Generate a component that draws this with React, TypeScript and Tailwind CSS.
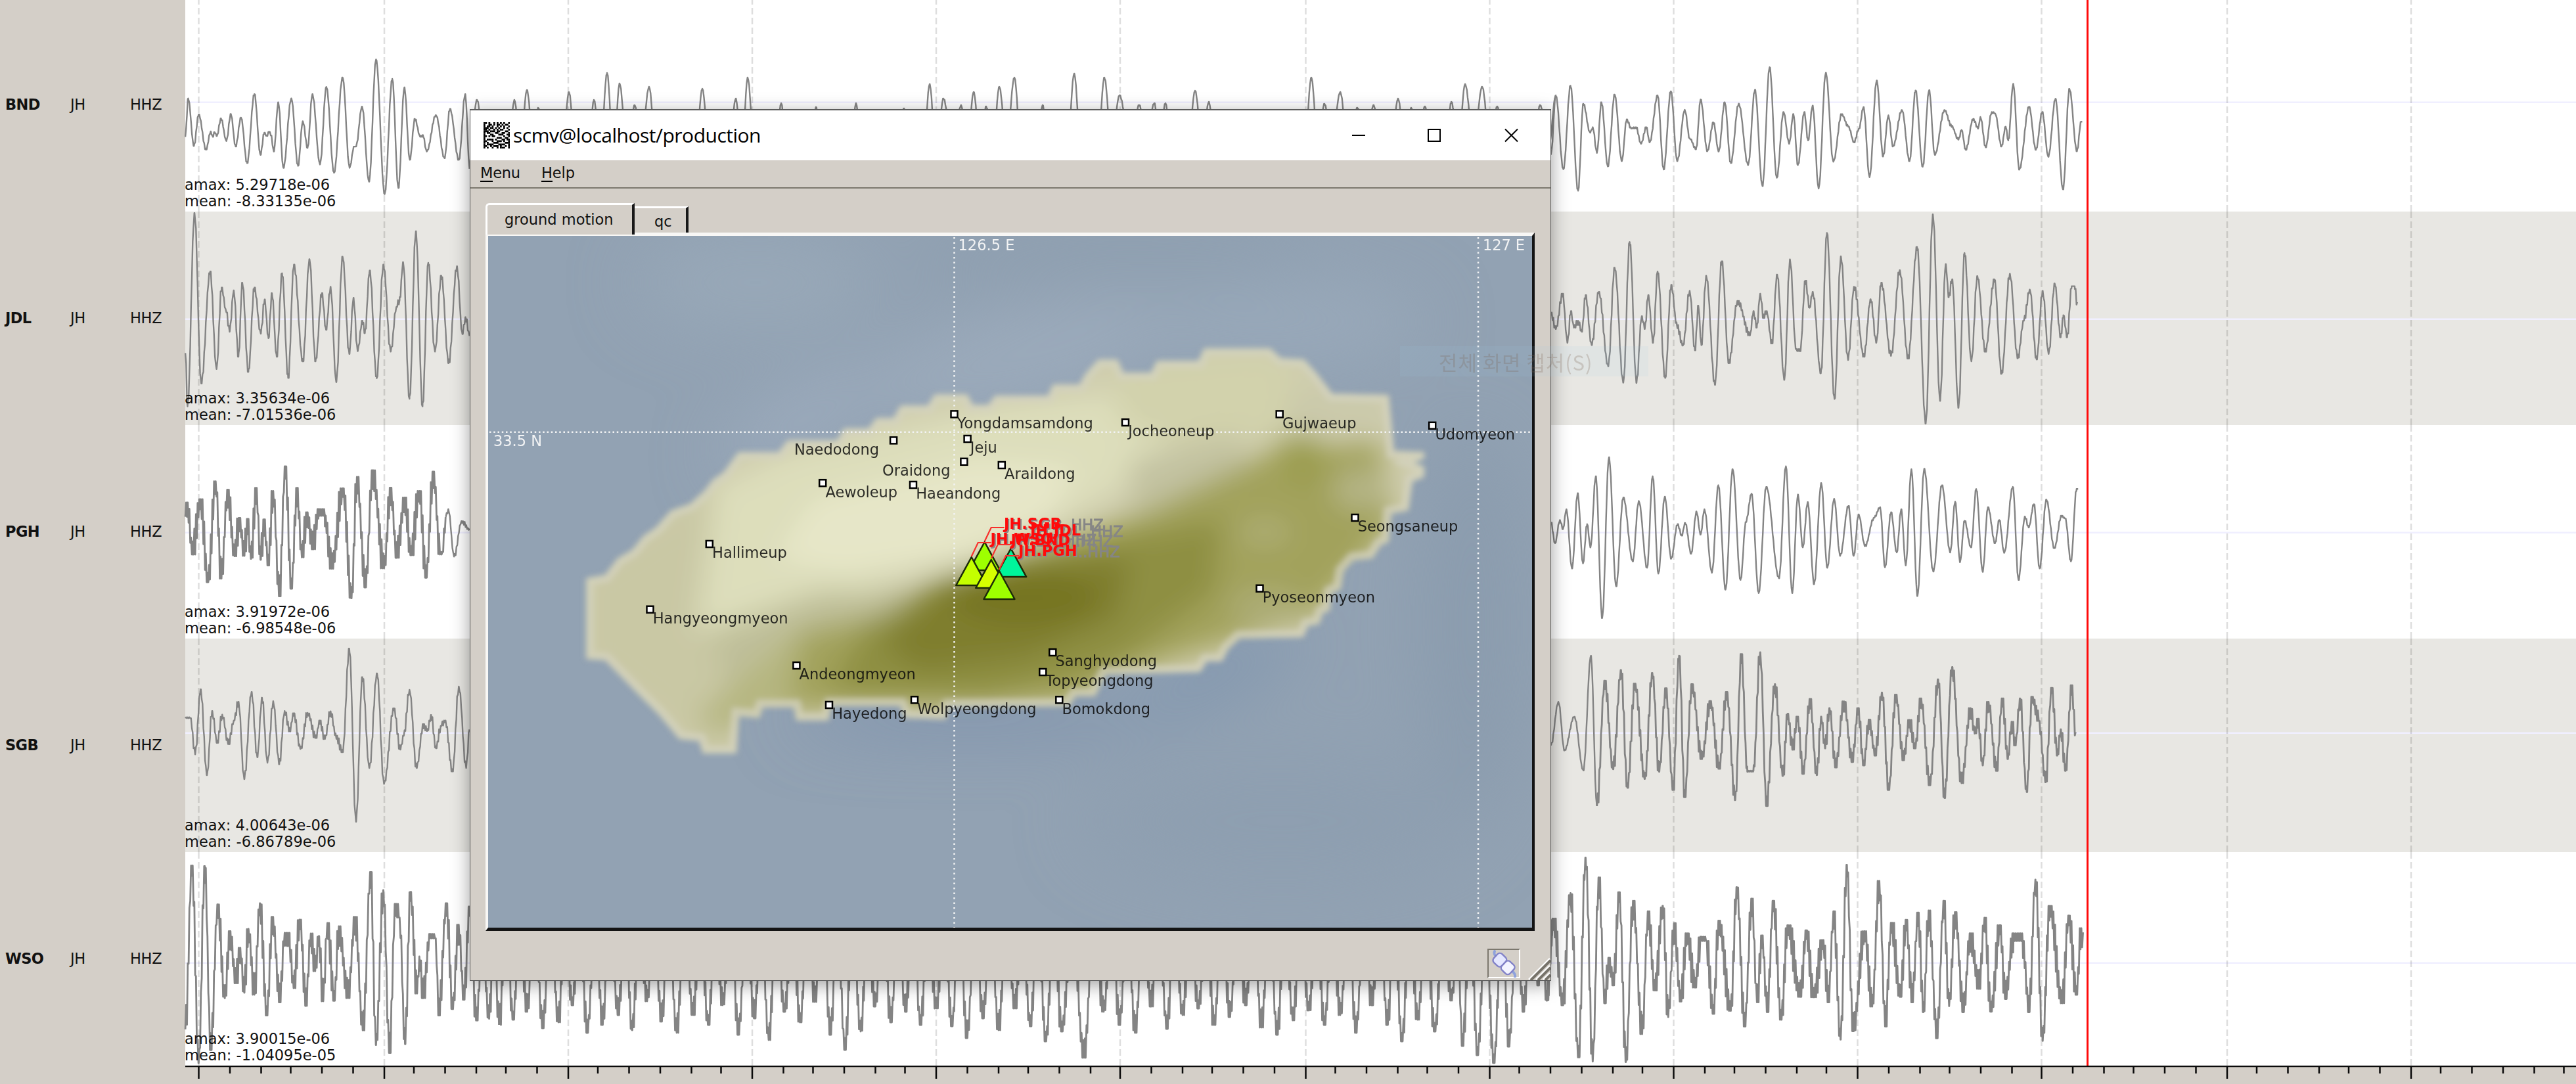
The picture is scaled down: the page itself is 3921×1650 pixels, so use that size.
import React from "react";

type Pt = [number, number];
type Segment = { x0: number; y0: number; sx: number; sy: number; jitter: number; data: string };
type Station = { code: string; amax: string; mean: string; zero: number; shaded: boolean; segments: Segment[] };

const LEFT = 2.0632;
const RIGHT = 1.7422;

const STATIONS: Station[] = [
  {
    code: "BND", amax: "5.29718e-06", mean: "-8.33135e-06", zero: 155.7, shaded: false,
    segments: [
      { x0: 0, y0: 0, sx: LEFT, sy: 2.3758, jitter: 2, data: "582,495 591,356 609,528 624,414 647,541 662,475 668,495 674,478 681,492 694,428 711,510 725,412 740,530 757,425 776,590 799,340 818,560 830,480 838,492 845,476 851,490 860,548 874,370 890,607 915,356 936,600 951,438 966,535 981,340 1005,595 1025,314 1049,625 1076,280 1098,607 1112,530 1118,530 1137,385 1159,657 1181,215 1208,702 1232,285 1251,680 1270,316 1287,578 1303,430 1320,495 1328,488 1340,548 1369,416 1396,572 1413,394 1441,578 1461,340 1475,610" },
      { x0: 0, y0: 0, sx: 1, sy: 1, jitter: 1, data: "714,250 726,152 740,260 772,260 783,152 792,230 802,137 812,220 819,164 830,250 855,250 866,140 877,250 895,240 904,152 914,230 924,111 934,240 943,127 955,240 966,160 976,220 988,132 999,240 1058,240 1069,135 1080,240 1109,240 1120,150 1129,240 1138,118 1149,240 1180,240 1189,157 1198,240 1233,240 1242,163 1250,240 1294,240 1303,157 1312,250 1367,240 1376,165 1385,240 1405,240 1415,128 1425,240 1436,150 1450,230 1463,160 1472,230 1482,140 1492,230 1501,162 1511,230 1521,132 1532,220 1544,118 1555,240 1578,240 1587,160 1596,240 1624,240 1635,112 1646,240 1670,240 1681,118 1692,220 1704,145 1720,220 1734,160 1745,210 1757,157 1765,210 1774,157 1783,230 1808,230 1819,138 1830,220 1840,155 1850,240 1985,240 1996,118 2006,220 2016,158 2027,220 2040,140 2052,230 2066,164 2078,220 2091,160 2100,230 2117,230 2128,150 2138,220 2148,164 2158,220 2169,162 2178,240 2200,240 2209,155 2220,220 2230,128 2243,220 2256,132 2268,220 2279,162 2288,220 2335,220 2344,160 2358,220 2368,145" },
      { x0: 2340, y0: 0, sx: RIGHT, sy: 2.3758, jitter: 2, data: "36,560 49,345 69,612 88,310 108,690 122,375 140,480 147,460 158,553 170,370 187,602 205,342 224,583 237,432 249,465 262,460 275,520 289,460 298,515 319,345 335,613 354,330 371,583 391,397 404,500 421,540 433,360 451,547 467,443 481,548 497,370 513,590 534,375 559,597 577,325 597,673 616,243 635,643 653,405 668,520 679,412 691,597 708,405 718,508 730,382 746,682 765,263 785,585 807,413 825,458 840,515 853,465 865,387 881,641 900,291 917,566 931,417 943,530 967,398 987,583 1003,327 1022,603 1039,326 1054,560 1080,398 1098,455 1117,505 1125,470 1136,542 1156,430 1169,465 1175,423 1189,533 1205,405 1214,410 1231,530 1242,458 1249,508 1262,303 1278,614 1304,386 1322,542 1339,405 1355,567 1374,357 1394,685 1411,321 1431,547 1442,440 1447,440" },
    ],
  },
  {
    code: "JDL", amax: "3.35634e-06", mean: "-7.01536e-06", zero: 485.7, shaded: true,
    segments: [
      { x0: 0, y0: 0, sx: LEFT, sy: 2.3758, jitter: 5, data: "582,1265 589,1470 611,770 632,1387 660,982 680,1335 696,1040 711,1130 721,1200 734,1050 749,1290 761,1022 780,1345 799,1040 819,1207 831,1083 843,1223 854,1060 869,1290 886,988 905,1367 923,957 951,1307 972,937 991,1307 1011,1060 1024,1193 1038,1037 1056,1382 1076,928 1097,1280 1110,1077 1123,1270 1138,1160 1146,1205 1161,978 1183,1368 1204,957 1227,1272 1245,1110 1255,1085 1266,948 1286,1442 1306,836 1327,1470 1345,950 1366,1272 1386,997 1409,1313 1435,963 1452,1208 1462,1147 1475,1215" },
      { x0: 2340, y0: 0, sx: RIGHT, sy: 2.3758, jitter: 5, data: "36,1130 49,1190 67,1062 80,1240 89,1125 97,1185 108,1160 118,1200 128,1067 144,1248 163,1055 188,1325 205,968 228,1384 245,875 263,1385 277,1143 285,1190 294,1067 307,1240 319,982 339,1367 355,1030 370,1175 386,1250 404,1052 418,1267 427,1105 435,1248 448,997 471,1392 489,945 508,1313 531,1088 564,1213 573,1125 582,1185 591,1062 600,1150 608,1125 622,1242 636,993 655,1374 670,938 686,1262 697,1270 711,1015 722,1113 730,1055 752,1350 768,842 788,1443 805,927 824,1302 840,1037 866,1290 884,1082 899,1240 912,1022 938,1287 961,977 983,1297 1007,893 1030,1532 1049,775 1068,1450 1083,955 1091,1075 1100,1010 1117,1475 1133,915 1151,1307 1167,998 1188,1272 1212,1010 1231,1352 1253,990 1274,1296 1290,1160 1306,1047 1324,1300 1340,1052 1356,1280 1372,1025 1388,1220 1395,1140 1405,1220 1417,1035 1425,1035 1432,1105" },
    ],
  },
  {
    code: "PGH", amax: "3.91972e-06", mean: "-6.98548e-06", zero: 810.7, shaded: false,
    segments: [
      { x0: 0, y0: 640, sx: LEFT, sy: 3, jitter: 26, data: "582,440 589,375 604,612 630,360 653,738 677,278 695,722 715,316 737,620 752,445 767,618 777,450 788,632 805,308 818,636 830,452 842,662 858,322 877,803 896,210 915,768 933,308 948,625 964,420 982,588 1001,405 1020,435 1041,677 1077,310 1104,812 1121,258 1148,762 1170,228 1206,675 1227,307 1246,627 1272,352 1290,615 1317,322 1338,718 1361,234 1382,612 1390,600 1400,440" },
      { x0: 0, y0: 640, sx: LEFT, sy: 3, jitter: 3, data: "1400,440 1408,405 1426,622 1450,460 1475,500" },
      { x0: 2340, y0: 640, sx: RIGHT, sy: 1.5525, jitter: 2, data: "36,240 47,290 60,235 68,257 77,210 92,350 107,172 121,338 132,245 141,300 155,132 172,467 190,87 209,392 228,182 253,333 269,190 291,348 306,132 321,362 338,180 355,327 372,245 383,272 392,242 408,315 422,215 433,270 443,210 463,360 480,153 499,400 518,115 539,377 553,240 568,173 587,408 607,157 641,373 659,108 676,408 691,175 704,300 717,193 734,387 753,148 769,348 787,185 803,320 825,202 839,320 852,222 869,297 893,230 909,205 922,347 938,217 953,312 965,210 977,343 992,115 1008,415 1026,114 1050,357 1073,153 1095,312 1108,192 1121,335 1133,237 1150,300 1164,162 1181,358 1195,205 1214,290 1225,235 1238,313 1261,157 1276,377 1293,227 1303,253 1317,198 1332,350 1350,187 1371,302 1390,225 1400,232 1415,333 1430,162 1435,162" },
    ],
  },
  {
    code: "SGB", amax: "4.00643e-06", mean: "-6.86789e-06", zero: 1115.7, shaded: true,
    segments: [
      { x0: 0, y0: 640, sx: LEFT, sy: 3, jitter: 6, data: "582,1355 598,1360 613,1525 630,1228 650,1620 666,1327 682,1472 698,1343 717,1478 735,1370 749,1285 767,1638 790,1240 808,1538 823,1266 840,1563 858,1282 877,1570 894,1327 910,1420 922,1337 944,1500 966,1335 992,1450 1004,1370 1020,1455 1038,1328 1055,1440 1076,1515 1097,1042 1118,1833 1138,1172 1160,1587 1184,1155 1206,1660 1237,1315 1257,1503 1268,1440 1286,1230 1308,1587 1330,1387 1342,1418 1354,1345 1369,1497 1385,1395 1398,1370 1421,1603 1441,1215 1464,1587 1475,1400" },
      { x0: 2340, y0: 640, sx: RIGHT, sy: 1.5525, jitter: 2, data: "36,768 56,665 72,780 98,700 122,827 142,556 158,911" },
      { x0: 2340, y0: 640, sx: RIGHT, sy: 1.5525, jitter: 13, data: "158,911 179,615 201,824 222,590 239,868 259,622 285,847 305,597 323,830 341,633 360,873 376,556 391,890 410,623 436,800 459,663 482,823 502,642 525,897 541,552 557,830 573,828 591,548 608,911 630,623 651,840 664,693 677,778 690,700 705,835 723,658 741,838 753,700 763,775 775,680 791,820 813,664 835,807 851,680 865,815 880,707 896,792 914,643 932,873 951,648 971,803 987,708 1002,775 1017,657 1041,862 1063,612 1080,892 1100,583 1125,857 1149,680 1160,740 1169,705 1181,815 1196,665 1218,828 1233,657 1248,800 1258,712 1268,768 1280,657 1298,878 1312,653 1330,710 1348,855 1364,632 1379,792 1388,730 1401,828 1417,626 1428,747" },
    ],
  },
  {
    code: "WSO", amax: "3.90015e-06", mean: "-1.04095e-05", zero: 1465.7, shaded: false,
    segments: [
      { x0: 0, y0: 1130, sx: LEFT, sy: 3, jitter: 26, data: "582,1310 603,563 624,1465 643,565 662,1405 684,740 706,1168 722,862 741,1100 754,938 767,1143 780,852 799,1152 816,735 838,1247 856,797 879,1187 894,870 910,930 922,1122 942,810 961,1203 976,873 990,1045 1001,885 1015,1182 1028,825 1050,1180 1064,840 1093,1168 1115,797 1140,1315 1164,592 1181,1382 1204,675 1223,1418 1242,738 1255,800 1272,1378 1289,683 1310,1147 1317,978 1329,1168 1350,875 1368,895 1378,1247 1402,735 1422,1218 1440,833 1457,1175 1475,750 1496,1270 1515,900 1536,1262 1550,900 1568,1290" },
      { x0: 0, y0: 0, sx: 1, sy: 1, jitter: 24, data: "760,1560 770,1400 781,1552 791,1400 802,1540 814,1400 826,1565 838,1400 850,1556 860,1400 871,1530 882,1400 894,1572 906,1400 917,1560 928,1400 941,1545 952,1400 962,1568 974,1400 985,1524 995,1400 1007,1555 1018,1400 1030,1572 1042,1400 1055,1545 1066,1400 1078,1560 1089,1400 1100,1530 1112,1400 1124,1575 1136,1400 1148,1550 1159,1400 1170,1583 1182,1400 1194,1540 1206,1400 1218,1556 1229,1400 1240,1525 1252,1400 1264,1575 1275,1400 1286,1598 1298,1400 1310,1570 1321,1400 1332,1532 1344,1400 1356,1556 1367,1400 1378,1540 1390,1400 1401,1560 1413,1400 1425,1535 1437,1400 1449,1562 1460,1400 1472,1580 1484,1400 1496,1550 1508,1400 1520,1568 1532,1400 1545,1535 1556,1400 1568,1562 1580,1400 1592,1585 1604,1400 1616,1570 1632,1400 1650,1610 1665,1400 1680,1540 1692,1400 1704,1560 1716,1400 1728,1572 1740,1400 1752,1532 1764,1400 1776,1566 1788,1400 1800,1545 1812,1400 1824,1535 1836,1400 1848,1560 1860,1400 1872,1548 1884,1400 1896,1530 1908,1400 1920,1564 1932,1400 1944,1575 1956,1400 1968,1553 1980,1400 1992,1538 2004,1400 2016,1560 2028,1400 2040,1545 2052,1400 2064,1572 2076,1400 2088,1530 2100,1400 2112,1560 2122,1400 2134,1585 2146,1400 2158,1552 2170,1400 2184,1570 2197,1400 2210,1523 2218,1400 2226,1592 2238,1400 2249,1606 2261,1400 2274,1618 2286,1400 2297,1593 2308,1400 2319,1540 2330,1400 2342,1500 2347,1400 2354,1523 2364,1400" },
      { x0: 2340, y0: 640, sx: RIGHT, sy: 1.5525, jitter: 26, data: "25,1370 44,1177 67,1382 88,1117 109,1505 128,1033 147,1515 163,1080 179,1377 190,1270 202,1335 217,1115 235,1516 254,1135 278,1450 294,1160 312,1347 333,1147 347,1410 363,1188 380,1373 397,1212 418,1340 434,1220 448,1230 467,1402 481,1182 513,1395 529,1103 550,1432 569,1130 583,1375 596,1217 610,1398 626,1135 647,1416 664,1193 698,1362 713,1205 733,1363 758,1228 772,1375 786,1160 804,1463 821,1050 837,1443 868,1207 888,1385 907,1088 923,1432 939,1187 963,1362 978,1180 994,1375 1010,1163 1024,1398 1038,1158 1060,1460 1078,1135 1092,1384 1108,1162 1130,1398 1148,1212 1172,1343 1186,1175 1203,1397 1227,1193 1241,1367 1263,1212 1287,1230 1304,1398 1321,1085 1340,1466 1359,1147 1392,1377 1409,1170 1430,1357 1442,1200 1448,1245" },
    ],
  },
];

/* Joins successive extremes by half cosines; jitter adds the fast oscillation on top. */
function tracePath(s: Segment): string {
  const pts: Pt[] = s.data.split(" ").map((p) => {
    const [x, y] = p.split(",").map(Number);
    return [s.x0 + x / s.sx, s.y0 + y / s.sy];
  });
  const out: string[] = [];
  let i = 0;
  let n = 0;
  for (let x = pts[0][0]; x <= pts[pts.length - 1][0]; x += 1.25) {
    while (i < pts.length - 2 && x > pts[i + 1][0]) {
      i++;
      out.push(`${pts[i][0].toFixed(1)},${pts[i][1].toFixed(1)}`);
    }
    const [xa, ya] = pts[i];
    const [xb, yb] = pts[i + 1];
    const t = Math.min(1, (x - xa) / (xb - xa));
    let y = ya + ((yb - ya) * (1 - Math.cos(Math.PI * t))) / 2;
    n++;
    y += (n % 2 ? 1 : -1) * s.jitter * (0.8 + 0.3 * Math.sin(n * 0.61));
    y = Math.max(Math.min(ya, yb), Math.min(Math.max(ya, yb), y));
    out.push(`${x.toFixed(1)},${y.toFixed(1)}`);
  }
  return "M" + out.join("L");
}

const tickX = (k: number) => Math.ceil((302.05 + 46.75 * k) / 2.5) * 2.5;
const MAJOR = Array.from({ length: 13 }, (_, i) => tickX(i * 6));
const TICKS = Array.from({ length: 78 }, (_, i) => i);

function StationRow({ s, i }: { s: Station; i: number }) {
  const top = -3 + 325 * i;
  return (
    <div className="flex h-[325px] w-full">
      <div className="flex w-[282px] shrink-0 items-center bg-[#d4cfc8] pl-[8px]">
        <span className="w-[99px] font-bold tracking-[-0.6px]">{s.code}</span>
        <span className="w-[91px] tracking-[-0.5px]">JH</span>
        <span className="tracking-[-0.3px]">HHZ</span>
      </div>
      <div className={`relative flex flex-1 flex-col justify-end pb-[3px] ${s.shaded ? "bg-[#e8e7e3]" : "bg-white"}`}>
        <svg className="absolute inset-0 overflow-visible" width="3639" height="325" viewBox={`282 ${top} 3639 325`}>
          <path d={`M282 ${s.zero}H3921`} stroke="#f0efff" strokeWidth="2.5" />
          {MAJOR.map((x) => (
            <path key={x} d={`M${x} ${top}v325`} stroke="#000" strokeOpacity="0.13" strokeWidth="2.5" strokeDasharray="10 5" />
          ))}
          {s.segments.map((g, j) => (
            <path key={j} d={tracePath(g)} fill="none" stroke="#848484" strokeWidth={g.jitter > 10 ? 2.8 : 2.4} strokeLinejoin="round" />
          ))}
        </svg>
        <div className="relative -ml-px h-[25px] leading-[25px]">amax: {s.amax}</div>
        <div className="relative -ml-px h-[25px] leading-[25px]">mean: {s.mean}</div>
      </div>
    </div>
  );
}

type City = { n: string; x: number; y: number; tx?: number };
const CITIES: City[] = [
  { n: "Yongdamsamdong", x: 1452.5, y: 630.4 },
  { n: "Naedodong", x: 1360.1, y: 670.4, tx: 1209 },
  { n: "Jeju", x: 1472.6, y: 668 },
  { n: "Oraidong", x: 1467.4, y: 702.8, tx: 1343 },
  { n: "Araildong", x: 1524.8, y: 708 },
  { n: "Aewoleup", x: 1252.2, y: 735.2 },
  { n: "Haeandong", x: 1390, y: 738 },
  { n: "Jocheoneup", x: 1713, y: 643 },
  { n: "Gujwaeup", x: 1947.7, y: 630.4 },
  { n: "Udomyeon", x: 2180.2, y: 647.8 },
  { n: "Hallimeup", x: 1079.8, y: 828 },
  { n: "Hangyeongmyeon", x: 989.5, y: 927.7 },
  { n: "Andeongmyeon", x: 1212.4, y: 1013 },
  { n: "Hayedong", x: 1262, y: 1073 },
  { n: "Wolpyeongdong", x: 1392, y: 1065.3 },
  { n: "Sanghyodong", x: 1602.3, y: 993 },
  { n: "Topyeongdong", x: 1587.3, y: 1023 },
  { n: "Bomokdong", x: 1612.3, y: 1065.3 },
  { n: "Seongsaneup", x: 2062.5, y: 788 },
  { n: "Pyoseonmyeon", x: 1917.5, y: 895.7 },
];

const ISLAND =
  "892,880 892,1003 921,1005 965,1050 1003,1088 1034,1125 1064,1128 1070,1147 1121,1147 1125,1090 1156,1093 1161,1077 1208,1077 1212,1097 1261,1097 1266,1075 1370,1075 1376,1093 1440,1095 1445,1077 1628,1075 1637,1060 1667,1060 1683,1027 1827,1023 1837,1007 1860,1007 1870,988 1887,972 1984,970 1991,953 2008,950 2014,933 2024,930 2027,903 2041,897 2045,870 2060,853 2089,850 2102,830 2114,825 2118,782 2144,777 2150,733 2168,726 2168,710 2152,704 2168,698 2168,688 2122,686 2114,601 2028,599 2005,569 1985,547 1950,545 1933,530 1833,530 1824,549 1761,549 1752,567 1710,567 1701,547 1672,547 1652,569 1643,585 1603,585 1595,602 1515,602 1504,616 1481,616 1472,600 1423,600 1412,617 1371,617 1360,636 1334,636 1322,652 1285,652 1274,670 1199,670 1185,688 1124,688 1101,719 1085,730 1072,747 1050,767 1021,777 998,803 980,815 962,837 940,850 921,875";

const SENSORS = [
  { x: 1498.7, y: 825, c: "#9eff00" },
  { x: 1538.7, y: 835, c: "#00f59b" },
  { x: 1478.7, y: 848, c: "#c4ff00" },
  { x: 1508.7, y: 852, c: "#d6ff00" },
  { x: 1521, y: 869, c: "#9eff00" },
];

const SENSOR_LABELS = [
  { t: "JH.SGB", x: 1528, y: 805, lx: 1498.7, ly: 824, w: 88 },
  { t: "JH.JDL", x: 1568, y: 815, lx: 1538.7, ly: 834, w: 78 },
  { t: "JH.WSO", x: 1507.5, y: 828, lx: 1478.7, ly: 847, w: 98 },
  { t: "JH.BND", x: 1538.5, y: 830, lx: 1508.7, ly: 850, w: 92 },
  { t: "JH.PGH", x: 1550, y: 846, lx: 1521, ly: 867, w: 91 },
];

function MapView() {
  return (
    <svg className="block" width="1589" height="1053" viewBox="743 359 1589 1053" fontFamily="'DejaVu Sans', sans-serif" fontSize="22.5">
      <defs>
        <filter id="soft" x="-20%" y="-20%" width="140%" height="140%"><feGaussianBlur stdDeviation="4" /></filter>
        <filter id="mid" x="-40%" y="-40%" width="180%" height="180%"><feGaussianBlur stdDeviation="20" /></filter>
        <filter id="wide" x="-60%" y="-60%" width="220%" height="220%"><feGaussianBlur stdDeviation="50" /></filter>
        <clipPath id="land"><polygon points={ISLAND} /></clipPath>
      </defs>
      <rect x="743" y="359" width="1589" height="1053" fill="#92a2b3" />
      <g filter="url(#wide)">
        <ellipse cx="1150" cy="430" rx="180" ry="70" fill="#98a8b8" />
        <ellipse cx="1560" cy="540" rx="260" ry="70" transform="rotate(-14 1560 540)" fill="#9baabb" />
        <ellipse cx="1950" cy="490" rx="220" ry="60" fill="#99a9ba" />
        <ellipse cx="1220" cy="640" rx="140" ry="50" transform="rotate(-30 1220 640)" fill="#9baabc" />
        <ellipse cx="1700" cy="395" rx="300" ry="40" fill="#8d9eaf" />
        <ellipse cx="1480" cy="1090" rx="280" ry="24" fill="#7a8fab" />
        <ellipse cx="1840" cy="1030" rx="150" ry="34" transform="rotate(-25 1840 1030)" fill="#8095ae" />
        <ellipse cx="2240" cy="950" rx="80" ry="300" fill="#8b9cae" />
        <ellipse cx="1950" cy="1250" rx="300" ry="90" fill="#8e9fb0" />
      </g>
      <g filter="url(#soft)">
        <polygon points={ISLAND} fill="#cfcdae" />
        <g clipPath="url(#land)">
          <g filter="url(#mid)">
            <polygon points="890,870 1080,740 1110,1000 1180,1090 1080,1150 890,1010" fill="#c9c8a4" />
            <polygon points="1090,740 1200,690 1500,620 1760,590 1780,700 1640,780 1500,850 1360,880 1200,960 1060,960" fill="#dddebb" />
            <polygon points="1240,760 1480,700 1640,710 1600,790 1460,850 1280,870 1180,850" fill="#e6e6c8" />
            <polygon points="1700,560 1930,540 2020,610 1960,660 1790,680 1700,640" fill="#d2d2ac" />
            <polygon points="1960,590 2110,600 2110,650 1960,660" fill="#cac9aa" />
            <polygon points="1720,700 1880,660 1900,720 1720,780" fill="#c3c2a1" />
            <polygon points="1080,960 1250,900 1380,900 1380,950 1210,1010 1190,1080 1120,1090" fill="#bfbf9a" />
            <polygon points="1130,1030 1200,970 1260,950 1300,1070 1130,1100 1090,1120 1060,1090" fill="#b5b680" />
            <polygon points="1200,1080 1220,960 1370,930 1470,870 1560,840 1740,780 1930,690 1960,660 2010,680 2100,670 2120,800 2000,940 1860,980 1700,1030 1640,1070" fill="#a2a25c" />
            <polygon points="1260,1050 1320,950 1430,880 1700,820 1860,790 1850,900 1700,1010 1500,1065" fill="#8e8f42" />
            <polygon points="1340,980 1430,895 1560,855 1720,850 1700,940 1560,1000 1400,1020" fill="#7f7e2d" />
            <ellipse cx="1560" cy="910" rx="110" ry="38" fill="#767522" />
            <ellipse cx="1985" cy="700" rx="30" ry="40" fill="#9b9d50" />
            <ellipse cx="2070" cy="745" rx="40" ry="30" fill="#b5b587" />
            <ellipse cx="1925" cy="810" rx="40" ry="20" fill="#adad74" />
            <ellipse cx="1930" cy="925" rx="60" ry="30" fill="#acac74" />
          </g>
          <polygon points={ISLAND} fill="none" stroke="#d3d2be" strokeWidth="24" strokeOpacity="0.75" />
        </g>
      </g>
      <g stroke="#f2f3f4" strokeWidth="2.5">
        <path d="M1452.5 361V1412M2250 361V1412" strokeDasharray="2.5 5" />
        <path d="M745 657.7H2332" strokeDasharray="2.5 3.75" />
      </g>
      <g fill="#f2f3f4">
        <text x="1458.5" y="381" textLength="86">126.5 E</text>
        <text x="2257" y="381" textLength="64">127 E</text>
        <text x="751" y="678.7" textLength="74">33.5 N</text>
      </g>
      {CITIES.map((c) => (
        <g key={c.n}>
          <rect x={c.x - 5} y={c.y - 5} width="10" height="10" fill="#fff" stroke="#000" strokeWidth="2.5" />
          <text x={c.tx ?? c.x + 4.2} y={c.y + 21.3} fill="#0a0a0a" fillOpacity="0.85">{c.n}</text>
        </g>
      ))}
      {SENSORS.map((s) => (
        <path key={s.x} d={`M${s.x} ${s.y}l23.5 43h-47z`} fill={s.c} stroke="#1c2a08" strokeWidth="2.5" strokeLinejoin="round" />
      ))}
      {SENSOR_LABELS.map((l) => (
        <g key={l.t}>
          <path d={`M${l.lx} ${l.ly}l10 -21h20`} fill="none" stroke="#f8302c" strokeWidth="2.2" />
          <text x={l.x + 2} y={l.y + 2} fill="#8a8a8a" fontWeight="700">{l.t}</text>
          <text x={l.x + l.w} y={l.y + 2} fill="#868686" stroke="#868686" strokeWidth="0.9">..HHZ</text>
        </g>
      ))}
      {SENSOR_LABELS.map((l) => (
        <text key={l.t} x={l.x} y={l.y} fill="#ff0a0a" fontWeight="700">{l.t}</text>
      ))}
    </svg>
  );
}

const APP_ICON = [
  "1101001010101001",
  "1001101011010110",
  "1011010010101001",
  "1110110101001010",
  "1101001010110001",
  "1110111011000110",
  "1011000110011001",
  "1000110001110011",
  "1101011000001001",
  "1000000011100110",
  "1011110100011011",
  "1100010011101001",
  "1010001110000111",
  "1011110001111001",
  "1100101110100101",
  "1010010010111001",
];

function AppIcon() {
  return (
    <svg className="shrink-0" width="40" height="40" viewBox="0 0 16 16">
      <rect width="16" height="16" fill="#fff" />
      {APP_ICON.flatMap((row, y) =>
        row.split("").map((b, x) => (b === "1" ? <rect key={`${x}-${y}`} x={x} y={y} width="1.1" height="1.1" /> : null)),
      )}
    </svg>
  );
}

function MapWindow() {
  return (
    <div className="absolute left-[715px] top-[166px] flex h-[1327px] w-[1646px] flex-col border border-t-2 border-[#5b5b5b] bg-[#d4cfc8] shadow-[0_6px_26px_rgba(0,0,0,0.38)]">
      <div className="flex h-[76px] shrink-0 items-center bg-white pl-5">
        <AppIcon />
        <span className="ml-[5px] mt-[-1px] font-['Open_Sans',sans-serif] text-[30px] leading-none tracking-[-0.5px] text-black">scmv@localhost/production</span>
        <svg className="ml-auto mr-[48px]" width="256" height="24" viewBox="0 0 256 24" fill="none" stroke="#000" strokeWidth="2">
          <path d="M2 12h20M118 3h18v18h-18z" />
          <path d="M235 2.5l19 19M254 2.5l-19 19" />
        </svg>
      </div>
      <div className="flex h-[43px] shrink-0 items-start gap-[32px] border-b-[2.5px] border-[#7c786e] pl-[15px] pt-[7px] leading-[25px] text-[#111]">
        <span className="w-[61px] tracking-[-0.3px]"><span className="inline-block h-[26px] border-b-[2.5px] border-black">M</span>enu</span>
        <span className="tracking-[-0.1px]"><span className="inline-block h-[26px] border-b-[2.5px] border-black">H</span>elp</span>
      </div>
      <div className="flex h-[67px] shrink-0 items-end pl-[23px] text-[#111]">
        <div className="relative z-10 -mb-[3px] h-[48px] w-[227px] rounded-tl-[6px] border-l-[3px] border-r-[4px] border-t-[3px] border-l-white border-r-[#181818] border-t-white bg-[#d4cfc8] pl-[26px] pt-[10px] leading-[25px]">ground motion</div>
        <div className="h-[40px] w-[82px] border-r-[4px] border-t-[3px] border-r-[#181818] border-t-white pl-[30px] pt-[8px] leading-[25px]">qc</div>
      </div>
      <div className="ml-[23px] h-[1063px] w-[1597px] shrink-0 border-b-[5px] border-l-[4px] border-r-[4px] border-t-[5px] border-b-[#141414] border-l-[#f8f7f5] border-r-[#141414] border-t-[#f8f7f5]">
        <MapView />
      </div>
      <div className="relative flex flex-1 items-start justify-end pr-[46px] pt-[27px]">
        <div className="flex h-[45px] w-[50px] items-center justify-center border-[2.5px] border-b-white border-l-[#7c786e] border-r-white border-t-[#7c786e]">
          <svg width="42" height="42" viewBox="0 0 42 42" strokeLinecap="round">
            <path d="M7 2C5 7 8 8 10 10M38 41c1-5-2-6-4-9" fill="none" stroke="#8fa2dc" strokeWidth="4" />
            <g transform="rotate(43 21 21)">
              <rect x="4" y="12" width="17" height="18" rx="5" fill="#e4e7ff" stroke="#8282c8" strokeWidth="2.4" />
              <rect x="21" y="12" width="17" height="18" rx="5" fill="#f3f4ff" stroke="#8282c8" strokeWidth="2.4" />
            </g>
          </svg>
        </div>
        <svg className="absolute bottom-0 right-0" width="34" height="34" viewBox="0 0 34 34" fill="none">
          <path d="M1 33L33 1M12 33L33 12M23 33L33 23" stroke="#fff" strokeWidth="2.5" />
          <path d="M4 34L34 4M15 34L34 15M26 34L34 26" stroke="#77736a" strokeWidth="4" />
        </svg>
      </div>
    </div>
  );
}

export default function App() {
  return (
    <div className="relative h-[1650px] w-[3921px] overflow-hidden bg-[#d4cfc8] font-['DejaVu_Sans',sans-serif] text-[22.5px] leading-none text-[#111]">
      <div className="-mt-[3px] flex flex-col">
        {STATIONS.map((s, i) => (
          <StationRow key={s.code} s={s} i={i} />
        ))}
        <div className="relative flex h-[28px] bg-[#d4cfc8] pl-[282px]">
          <svg width="3639" height="28" viewBox="282 1622 3639 28" stroke="#0a0a0a" strokeWidth="2.5">
            <path d="M282 1623H3921" />
            {TICKS.map((k) => (
              <path key={k} d={`M${tickX(k)} 1622v${k % 6 === 0 ? 20 : 12}`} />
            ))}
          </svg>
        </div>
      </div>
      <div className="absolute left-[3176px] top-0 h-[1622px] w-[3px] bg-[#ff0a0a]" />
      <MapWindow />
      <div className="absolute left-[2131px] top-[527px] flex h-[46px] w-[378px] items-center bg-[#9ed2f0]/10 pl-[59px]">
        <span className="whitespace-nowrap font-['Noto_Sans_CJK_KR',sans-serif] text-[31px] tracking-[0.9px] text-[#7a6450]/25">전체 화면 캡처(S)</span>
      </div>
    </div>
  );
}
